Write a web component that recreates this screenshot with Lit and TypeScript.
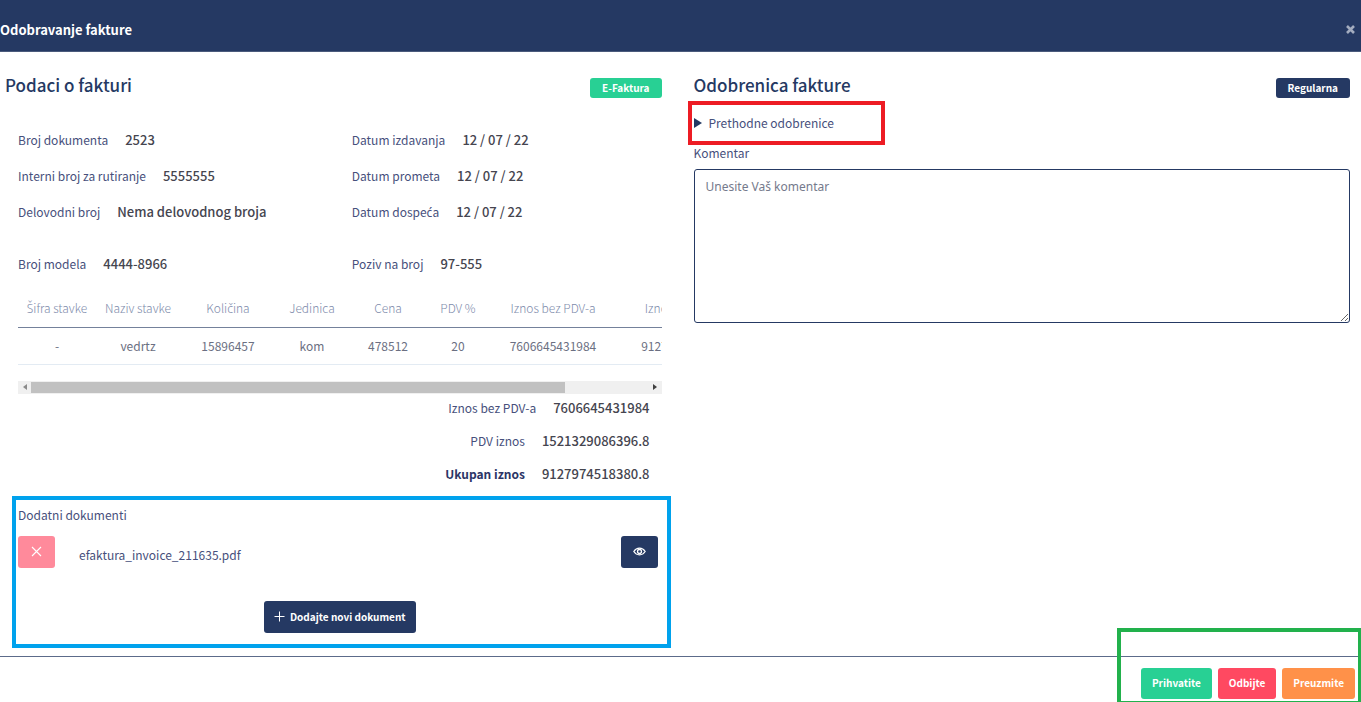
import { LitElement, html, css } from "lit";
import { customElement, state } from "lit/decorators.js";

interface Field {
  label: string;
  value: string;
}

const DETAILS: Field[] = [
  { label: "Broj dokumenta", value: "2523" },
  { label: "Datum izdavanja", value: "12 / 07 / 22" },
  { label: "Interni broj za rutiranje", value: "5555555" },
  { label: "Datum prometa", value: "12 / 07 / 22" },
  { label: "Delovodni broj", value: "Nema delovodnog broja" },
  { label: "Datum dospeća", value: "12 / 07 / 22" },
];

const REFERENCES: Field[] = [
  { label: "Broj modela", value: "4444-8966" },
  { label: "Poziv na broj", value: "97-555" },
];

const COLUMNS = [
  { title: "Šifra stavke", width: 78 },
  { title: "Naziv stavke", width: 84 },
  { title: "Količina", width: 96 },
  { title: "Jedinica", width: 72 },
  { title: "Cena", width: 80 },
  { title: "PDV %", width: 60 },
  { title: "Iznos bez PDV-a", width: 130 },
  { title: "Iznos sa PDV-om", width: 143 },
];

const ITEMS = [
  ["-", "vedrtz", "15896457", "kom", "478512", "20", "7606645431984", "9127974518380.8"],
];

const withAccents = (text: string) =>
  text
    .split(/([ŠšČčĆć])/)
    .map((part, i) => (i % 2 ? html`<span class="accent">${part}</span>` : part));

@customElement("app-root")
export class AppRoot extends LitElement {
  @state() private comment = "";

  static styles = css`
    :host {
      --navy: #253963;
      --label: #47507c;
      --value: #45454f;
      display: flex;
      flex-direction: column;
      min-height: 100vh;
      overflow: hidden;
      background: #fff;
      color: var(--label);
      font-family: "Noto Sans CJK SC", "Noto Sans", sans-serif;
      font-size: 12px;
      line-height: 20px;
    }
    *,
    *::before,
    *::after {
      box-sizing: border-box;
    }
    button {
      border: 0;
      border-radius: 3px;
      color: #fff;
      font: inherit;
      font-size: 10px;
      font-weight: 700;
      cursor: pointer;
    }
    svg {
      display: block;
    }
    .accent {
      font-family: "Noto Sans", sans-serif;
      line-height: 0;
    }
    .header {
      display: flex;
      align-items: center;
      justify-content: space-between;
      height: 52px;
      padding: 8px 6px 0 0;
      background: var(--navy);
      border-bottom: 1px solid #4a5b7c;
    }
    .header h1 {
      margin: 0;
      color: #fff;
      font-size: 13px;
      font-weight: 700;
    }
    .close {
      padding: 0;
      background: none;
      color: #a3acbf;
    }
    .body {
      flex: 1;
      display: grid;
      grid-template-columns: minmax(0, 1fr) minmax(0, 1fr);
      gap: 32px;
      padding: 24px 11px 8px 5px;
    }
    .heading {
      display: flex;
      align-items: center;
      justify-content: space-between;
      height: 20px;
    }
    .heading h2 {
      margin: 0 0 2px;
      color: var(--navy);
      font-size: 17px;
      font-weight: 500;
    }
    .badge {
      margin-top: 4px;
      padding: 0 12px;
      border-radius: 3px;
      background: var(--navy);
      color: #fff;
      font-size: 10px;
      font-weight: 700;
    }
    .badge.green {
      background: #28d094;
    }
    .invoice {
      padding-left: 13px;
    }
    .fields {
      display: grid;
      grid-template-columns: 1fr 1fr;
      gap: 16px 24px;
      margin: 34px 0 0;
    }
    .fields.refs {
      margin-top: 32px;
    }
    .field {
      display: flex;
      align-items: center;
      gap: 17px;
    }
    dl,
    dd {
      margin: 0;
    }
    dd {
      color: var(--value);
      font-size: 13px;
      font-weight: 500;
    }
    .scroller {
      margin-top: 16px;
      overflow: hidden;
    }
    table {
      width: 743px;
      table-layout: fixed;
      border-collapse: collapse;
      text-align: center;
    }
    th {
      height: 37px;
      padding: 0;
      border-bottom: 1px solid #74819b;
      color: #7e8bab;
      font-weight: 300;
    }
    td {
      height: 37px;
      padding: 0;
      border-bottom: 1px solid #e3ebf3;
      color: #6b6f82;
    }
    .scrollbar {
      display: grid;
      grid-template-columns: 13px 534fr 83fr 13px;
      align-items: center;
      justify-items: center;
      height: 13px;
      margin-top: 16px;
      background: #f0f0f0;
    }
    .thumb {
      justify-self: stretch;
      height: 11px;
      background: #c1c1c1;
    }
    .scrollbar .end {
      grid-column: 4;
    }
    .totals {
      display: grid;
      gap: 13px;
      padding: 4px 12px 0 0;
    }
    .totals .field {
      justify-content: flex-end;
    }
    .totals .grand dt {
      color: #2b3566;
      font-weight: 700;
    }
    .documents {
      position: relative;
      margin-top: 21px;
    }
    .documents::after {
      content: "";
      position: absolute;
      inset: -9px -9px -15px -6px;
      border: 4px solid #00a2ed;
      pointer-events: none;
    }
    .file {
      display: flex;
      align-items: center;
      gap: 24px;
      padding-right: 4px;
    }
    .file span {
      flex: 1;
      padding-top: 6px;
    }
    .icon-btn {
      display: flex;
      justify-content: center;
      width: 37px;
      height: 32px;
      padding: 10px 0 0;
      background: var(--navy);
    }
    .icon-btn.remove {
      background: #ff8a9b;
    }
    .documents h3 {
      margin: 0 0 11px;
      font-size: 12px;
      font-weight: 400;
    }
    .add {
      display: flex;
      align-items: center;
      gap: 5px;
      height: 32px;
      margin: 33px auto 0;
      padding: 0 10px;
      background: var(--navy);
    }
    .previous {
      position: relative;
      margin-top: 17px;
    }
    .previous::after {
      content: "";
      position: absolute;
      top: -12px;
      left: -6px;
      width: 197px;
      height: 44px;
      border: 4px solid #ed1c24;
      pointer-events: none;
    }
    summary {
      display: flex;
      align-items: center;
      gap: 7px;
      list-style: none;
      cursor: pointer;
    }
    summary::before {
      content: "";
      border: solid transparent;
      border-width: 5px 0 5px 8px;
      border-left-color: var(--navy);
    }
    .comment-label {
      display: block;
      margin-top: 10px;
    }
    textarea {
      display: block;
      width: 100%;
      height: 154px;
      margin-top: 6px;
      padding: 7px 11px;
      border: 1px solid var(--navy);
      border-radius: 3px;
      background: #fff;
      color: var(--value);
      font: inherit;
      font-family: "Noto Sans", sans-serif;
    }
    textarea::placeholder {
      color: #757a8c;
    }
    .footer {
      position: relative;
      display: flex;
      justify-content: flex-end;
      gap: 6px;
      padding: 11px 6px 3px;
      border-top: 1px solid #5c6b8a;
    }
    .footer::after {
      content: "";
      position: absolute;
      right: 0;
      bottom: 0;
      width: 244px;
      height: 74px;
      border: 4px solid #22b14c;
      border-right-width: 3px;
      border-bottom-width: 1px;
      pointer-events: none;
    }
    .footer button {
      height: 31px;
      padding: 0 11px 2px;
    }
    .accept {
      background: #28d094;
    }
    .reject {
      background: #ff4961;
    }
    .download {
      background: #ff9149;
    }
  `;

  private renderField(field: Field, extra = "") {
    return html`<div class="field ${extra}">
      <dt>${withAccents(field.label)}</dt>
      <dd>${field.value}</dd>
    </div>`;
  }

  private onInput(event: Event) {
    this.comment = (event.target as HTMLTextAreaElement).value;
  }

  render() {
    return html`
      <header class="header">
        <h1>Odobravanje fakture</h1>
        <button class="close" type="button" aria-label="Zatvori">
          <svg width="9" height="9" viewBox="0 0 9 9" stroke="currentColor" stroke-width="2.6">
            <path d="M1 1 8 8M8 1 1 8" />
          </svg>
        </button>
      </header>

      <main class="body">
        <section>
          <div class="heading">
            <h2>Podaci o fakturi</h2>
            <span class="badge green">E-Faktura</span>
          </div>
          <div class="invoice">
            <dl class="fields">${DETAILS.map((f) => this.renderField(f))}</dl>
            <dl class="fields refs">${REFERENCES.map((f) => this.renderField(f))}</dl>

            <div class="scroller">
              <table>
                <colgroup>
                  ${COLUMNS.map((c) => html`<col style="width:${c.width}px" />`)}
                </colgroup>
                <thead>
                  <tr>${COLUMNS.map((c) => html`<th scope="col">${withAccents(c.title)}</th>`)}</tr>
                </thead>
                <tbody>
                  ${ITEMS.map((row) => html`<tr>${row.map((cell) => html`<td>${cell}</td>`)}</tr>`)}
                </tbody>
              </table>
            </div>
            <div class="scrollbar" aria-hidden="true">
              <svg width="4" height="6" viewBox="0 0 4 6"><path d="M4 0v6L0 3z" fill="#8b8b8b" /></svg>
              <div class="thumb"></div>
              <svg class="end" width="4" height="6" viewBox="0 0 4 6"><path d="M0 0v6l4-3z" fill="#404040" /></svg>
            </div>

            <dl class="totals">
              ${this.renderField({ label: "Iznos bez PDV-a", value: "7606645431984" })}
              ${this.renderField({ label: "PDV iznos", value: "1521329086396.8" })}
              ${this.renderField({ label: "Ukupan iznos", value: "9127974518380.8" }, "grand")}
            </dl>

            <div class="documents">
              <h3>Dodatni dokumenti</h3>
              <div class="file">
                <button class="icon-btn remove" type="button" aria-label="Obriši dokument">
                  <svg width="11" height="11" viewBox="0 0 11 11" stroke="#fff" stroke-width="1.1">
                    <path d="M1 1l9 9M10 1l-9 9" />
                  </svg>
                </button>
                <span>efaktura_invoice_211635.pdf</span>
                <button class="icon-btn" type="button" aria-label="Pogledaj dokument">
                  <svg width="13" height="11" viewBox="0 0 13 11" fill="none" stroke="#fff">
                    <path d="M.8 5.5C2.2 3.3 4.2 2.2 6.5 2.2s4.3 1.1 5.7 3.3c-1.4 2.2-3.4 3.3-5.7 3.3S2.2 7.7.8 5.5z" stroke-width="1.2" />
                    <circle cx="6.5" cy="5.5" r="2" stroke-width="1.3" />
                  </svg>
                </button>
              </div>
              <button class="add" type="button">
                <svg width="11" height="11" viewBox="0 0 11 11" stroke="#fff" stroke-width="1">
                  <path d="M5.5 .5v10M.5 5.5h10" />
                </svg>
                Dodajte novi dokument
              </button>
            </div>
          </div>
        </section>

        <section>
          <div class="heading">
            <h2>Odobrenica fakture</h2>
            <span class="badge">Regularna</span>
          </div>
          <details class="previous">
            <summary>Prethodne odobrenice</summary>
          </details>
          <label class="comment-label" for="comment">Komentar</label>
          <textarea
            id="comment"
            placeholder="Unesite Vaš komentar"
            .value=${this.comment}
            @input=${this.onInput}
          ></textarea>
        </section>
      </main>

      <footer class="footer">
        <button class="accept" type="button">Prihvatite</button>
        <button class="reject" type="button">Odbijte</button>
        <button class="download" type="button">Preuzmite</button>
      </footer>
    `;
  }
}
